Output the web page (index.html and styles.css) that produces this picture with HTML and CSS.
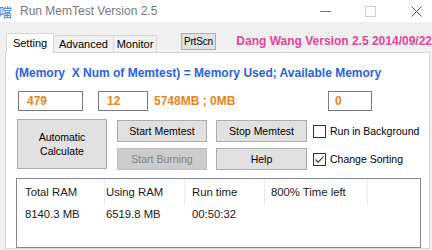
FILE: index.html
```html
<!DOCTYPE html>
<html>
<head>
<meta charset="utf-8">
<link rel="stylesheet" href="styles.css">
</head>
<body>
<div class="titlebar">
  <span class="appicon">噹</span>
  <span class="title">Run MemTest Version 2.5</span>
  <div class="controls">
    <span class="ctl-min"></span>
    <span class="ctl-max"></span>
    <svg class="ctl-close" width="11" height="11" viewBox="0 0 11 11"><path d="M0.5 0.5 L10.5 10.5 M10.5 0.5 L0.5 10.5" stroke="#555" stroke-width="1" fill="none"/></svg>
  </div>
</div>
<div class="tabrow">
  <div class="tabs">
    <div class="tab active">Setting</div>
    <div class="tab w-adv">Advanced</div>
    <div class="tab w-mon">Monitor</div>
  </div>
  <div class="btn prtscn">PrtScn</div>
  <div class="brand">Dang Wang Version 2.5 2014/09/22</div>
</div>
<div class="panel">
  <div class="formula">(Memory&nbsp; X Num of Memtest) = Memory Used; Available Memory</div>
  <div class="inputs">
    <div class="field f1">479</div>
    <div class="field f2">12</div>
    <div class="result">5748MB ; 0MB</div>
    <div class="field f3">0</div>
  </div>
  <div class="actions">
    <div class="btn big">Automatic<br>Calculate</div>
    <div class="col c2">
      <div class="btn">Start Memtest</div>
      <div class="btn disabled">Start Burning</div>
    </div>
    <div class="col c3">
      <div class="btn">Stop Memtest</div>
      <div class="btn">Help</div>
    </div>
    <div class="col c4">
      <div class="check"><span class="box"></span><span>Run in Background</span></div>
      <div class="check"><span class="box"><svg width="11" height="11" viewBox="0 0 11 11"><path d="M1.5 5.5 L4.2 8.2 L9.5 2.5" stroke="#333" stroke-width="1.1" fill="none"/></svg></span><span>Change Sorting</span></div>
    </div>
  </div>
  <div class="listview">
    <div class="lv-head">
      <div class="cell k1">Total RAM</div>
      <div class="cell k2">Using RAM</div>
      <div class="cell k3">Run time</div>
      <div class="cell k4">800% Time left</div>
    </div>
    <div class="lv-row">
      <div class="cell k1">8140.3 MB</div>
      <div class="cell k2">6519.8 MB</div>
      <div class="cell k3">00:50:32</div>
      <div class="cell k4"></div>
    </div>
  </div>
</div>
</body>
</html>
```
FILE: styles.css
```css
* { box-sizing: border-box; }
html, body { margin: 0; padding: 0; }
body {
  width: 432px;
  height: 250px;
  overflow: hidden;
  background: #f0f0f0;
  font-family: "Liberation Sans", Arial, sans-serif;
  color: #000;
}

.titlebar {
  height: 22px;
  background: #fff;
  display: flex;
  align-items: center;
}
.appicon {
  width: 14px;
  font-family: "Noto Sans CJK TC", "Noto Sans CJK SC", sans-serif;
  font-size: 13px;
  line-height: 1;
  color: #3a80d4;
  margin-left: -1px;
}
.title {
  margin-left: 7px;
  font-size: 12px;
  color: #7a7a7a;
}
.controls {
  margin-left: auto;
  margin-right: 10px;
  display: flex;
  align-items: center;
}
.ctl-min {
  width: 11px;
  height: 1px;
  background: #777;
}
.ctl-max {
  width: 11px;
  height: 11px;
  border: 1px solid #cfcfcf;
  margin-left: 34px;
}
.ctl-close {
  margin-left: 35px;
  display: block;
}

.tabrow {
  height: 30px;
  display: flex;
  align-items: flex-end;
  padding-left: 6px;
}
.tabs {
  display: flex;
  align-items: flex-end;
}
.tab {
  height: 17px;
  width: 48px;
  border: 1px solid #d9d9d9;
  border-bottom: none;
  background: #f0f0f0;
  font-size: 11px;
  line-height: 16px;
  text-align: center;
  white-space: nowrap;
}
.tab.active {
  height: 20px;
  background: #fff;
  line-height: 19px;
  margin-bottom: -1px;
  position: relative;
  z-index: 1;
}
.tab.w-adv { width: 60px; border-left: none; }
.tab.w-mon { width: 43px; border-left: none; }

.btn {
  background: #e1e1e1;
  border: 1px solid #adadad;
  font-size: 10.5px;
  display: flex;
  align-items: center;
  justify-content: center;
  text-align: center;
  white-space: nowrap;
}
.prtscn {
  width: 36px;
  height: 17px;
  margin-left: 24px;
  margin-bottom: 2px;
  justify-content: flex-start;
  padding-left: 2px;
  font-size: 10px;
  letter-spacing: -0.2px;
  overflow: hidden;
}
.brand {
  margin-left: 20px;
  margin-bottom: 4px;
  font-size: 12px;
  line-height: 14px;
  font-weight: bold;
  color: #e0469b;
  white-space: nowrap;
}

.panel {
  margin-left: 5px;
  width: 425px;
  height: 197px;
  background: #fff;
  border: 1px solid #d9d9d9;
  padding-left: 10px;
}
.formula {
  margin-top: 13px;
  margin-left: -1px;
  font-size: 12px;
  line-height: 14px;
  font-weight: bold;
  color: #2b62d9;
  white-space: nowrap;
}
.inputs {
  margin-top: 11px;
  display: flex;
  align-items: center;
  height: 20px;
}
.field {
  height: 20px;
  border: 1px solid #7a7a7a;
  background: #fff;
  font-size: 12px;
  font-weight: bold;
  color: #e7861a;
  line-height: 18px;
  padding-left: 8px;
}
.f1 { width: 65px; margin-left: 2px; }
.f2 { width: 50px; margin-left: 15px; }
.f3 { width: 44px; padding-left: 6px; }
.result {
  width: 180px;
  padding-left: 6px;
  font-size: 12px;
  font-weight: bold;
  color: #e7861a;
  white-space: nowrap;
}

.actions {
  margin-top: 8px;
  display: flex;
  align-items: flex-start;
}
.big {
  width: 90px;
  height: 50px;
  margin-left: 1px;
  line-height: 14px;
}
.col {
  display: flex;
  flex-direction: column;
  gap: 6px;
  margin-top: 1px;
}
.col .btn { height: 22px; }
.c2 { width: 90px; margin-left: 10px; }
.c3 { width: 91px; margin-left: 9px; }
.c4 { margin-left: 6px; }
.btn.disabled {
  background: #cccccc;
  border-color: #bfbfbf;
  color: #838383;
}
.check {
  height: 22px;
  display: flex;
  align-items: center;
  font-size: 10.5px;
  white-space: nowrap;
}
.box {
  width: 13px;
  height: 13px;
  border: 1px solid #333;
  background: #fff;
  margin-right: 4px;
  display: flex;
  align-items: center;
  justify-content: center;
}
.box svg { display: block; }

.listview {
  margin-top: 8px;
  width: 405px;
  height: 70px;
  border: 1px solid #828790;
  font-size: 11.3px;
  color: #1a1a1a;
}
.lv-head, .lv-row {
  display: flex;
}
.lv-head { height: 26px; }
.lv-row { height: 18px; }
.cell {
  display: flex;
  align-items: center;
  white-space: nowrap;
}
.lv-head .cell { border-right: 1px solid #ececec; }
.k1 { width: 88px; padding-left: 8px; }
.k2 { width: 80px; padding-left: 1px; }
.k3 { width: 80px; padding-left: 7px; }
.k4 { width: 103px; padding-left: 6px; }
```
